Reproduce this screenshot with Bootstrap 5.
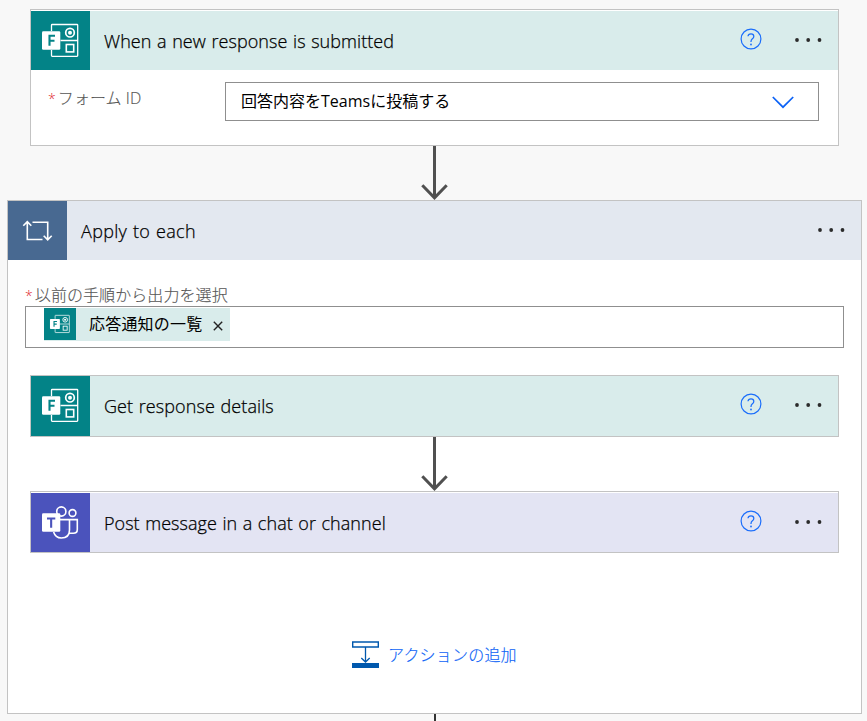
<!DOCTYPE html>
<html lang="ja">
<head>
<meta charset="utf-8">
<meta name="viewport" content="width=device-width, initial-scale=1">
<title>Flow designer</title>
<link href="https://cdn.jsdelivr.net/npm/bootstrap@5.3.0/dist/css/bootstrap.min.css" rel="stylesheet">
<style>
body{background:#f8f8f8;font-family:"Open Sans","Noto Sans CJK JP",sans-serif;font-size:16px;line-height:24px;color:#000}
.designer{width:867px;height:721px;padding:9px 5px 0 7px}
.step,.scope{border:1px solid #c3c3c3;background:#fff;width:809px}
.step{margin-left:23px}
.scope .step{margin-left:22px}
.scope{width:855px;height:514px}
.trigger{height:137px}
.action{height:62px}
.gap-top{padding-top:1px}
.step-head{height:59px}
.action.flush .step-head{height:60px}
.forms-tint{background:#d9eceb}.teams-tint{background:#e3e4f3}.scope-tint{background:#e3e8f0}
.tile{width:59px;flex:none}
.tile svg,.chip svg,.link-flow{display:block}
.bg-forms{background:#038387}.bg-teams{background:#4b53bc}.bg-scope{background:#486991}
.title{font-size:18px;font-weight:300;margin-left:14px;padding-bottom:0;white-space:nowrap;word-spacing:.8px;-webkit-text-stroke:.25px #000}
.t1{letter-spacing:.07px}.t2{letter-spacing:.32px}.t3{letter-spacing:.09px}.t4{letter-spacing:.05px}
.help{width:22px;height:22px;margin-right:32px;margin-bottom:4px}
.dots{width:28px;height:6px;margin-right:16px;margin-bottom:2px}
.flush .help{margin-bottom:5px}
.field-label{color:#555;font-weight:300;white-space:nowrap;letter-spacing:.08px;-webkit-text-stroke:.15px #555}
.req{color:#e0262d;-webkit-text-stroke:0;font-size:14px;margin-right:2px}
.box{border:1px solid #8f8f8f;background:#fff;color:#000}
.picker{width:594px;height:39px;margin-left:auto;margin-right:19px;padding:0 24px 0 15px}
.picker span{padding-bottom:2px}
.trigger-body{padding:12px 0 0 17px}
.scope-body{padding-top:23px}
.scope-label{margin-left:17px;height:23px}
.token-box{width:819px;height:42px;margin-left:17px;padding:1px 0 0 18px}
.chip{width:186px;height:33px}
.chip-icon{width:32px;height:32px;flex:none}
.chip-text{margin-left:13px;padding-top:4px;letter-spacing:.2px;white-space:nowrap}
.chip-x{margin:3px 7px 0 auto}
.add{color:#0b62f6;font-weight:300;margin:88px 0 0 344px;gap:9px;letter-spacing:.2px;-webkit-text-stroke:.15px #0b62f6}
.add span{padding-top:1px}
.link-main{margin-left:412px}.link-inner{margin-left:411px}.link-end{margin-left:427px}
.first-inner{margin-top:27px}
</style>
</head>
<body>
<svg class="d-none">
<symbol id="forms" viewBox="0 0 59 59"><g fill="none" stroke="#fff"><path d="M20.500 20V14.200Q20.500 13.500 21.200 13.500H46Q46.700 13.500 46.700 14.200V44.500Q46.700 45.300 46 45.300H21.200Q20.500 45.300 20.500 44.500V39M29.500 29.500H46.500" stroke-width="1.300"/><circle cx="39" cy="21.700" r="4.300" stroke-width="1.700"/><rect x="35.300" y="33.500" width="7.400" height="7.400" stroke-width="1.600"/></g><circle cx="39" cy="21.700" r="2" fill="#fff"/><rect x="11" y="20.300" width="18.300" height="18.500" rx="1.300" fill="#fff"/><path d="M18.500 34.700V24.800H24M18.500 29.800H23.500" fill="none" stroke="#038387" stroke-width="2.100"/></symbol>
<symbol id="teams" viewBox="0 0 59 59"><g fill="none" stroke="#fff" stroke-width="1.600"><circle cx="30.300" cy="18.500" r="4.600"/><circle cx="41.500" cy="20" r="3.400"/><path d="M29 26.600H46.300V36.500Q46.300 40.300 42.300 40.300H38.500M38.500 26.600V37Q38.500 45 30.300 45Q24.500 45 22.600 39"/></g><rect x="11" y="20.300" width="18.300" height="18.500" rx="1.300" fill="#fff"/><path d="M16 25.500H24.300M20.150 25.500V34.700" fill="none" stroke="#4b53bc" stroke-width="2.100"/></symbol>
<symbol id="help" viewBox="0 0 22 22"><circle cx="11" cy="11" r="9.900" fill="none" stroke="#1a6dfb" stroke-width="1.200"/><path d="M8 8.200Q8.200 5.800 11 5.800T13.800 8.400Q13.800 9.700 12.400 10.800T11 13.600V14" fill="none" stroke="#1a6dfb" stroke-width="1.250"/><circle cx="11" cy="16.500" r=".9" fill="#1a6dfb"/></symbol>
<symbol id="dots" viewBox="0 0 28 6"><g fill="#2b2b2b"><circle cx="3" cy="3" r="1.900"/><circle cx="14.200" cy="3" r="1.900"/><circle cx="25.500" cy="3" r="1.900"/></g></symbol>
<symbol id="arrow" viewBox="0 0 30 54"><path d="M15.500 0V51" stroke="#505050" stroke-width="3"/><path d="M3.300 39.300L15.500 51.800L27.700 39.300" fill="none" stroke="#505050" stroke-width="3"/></symbol>
</svg>
<main class="designer overflow-hidden">
  <section class="step trigger gap-top">
    <header class="step-head forms-tint d-flex align-items-center">
      <div class="tile bg-forms"><svg width="59" height="59"><use href="#forms"/></svg></div>
      <div class="title t1">When a new response is submitted</div>
      <svg class="help ms-auto"><use href="#help"/></svg><svg class="dots"><use href="#dots"/></svg>
    </header>
    <div class="trigger-body d-flex">
      <label class="field-label pt-1"><span class="req">*</span>フォーム ID</label>
      <div class="box picker d-flex align-items-center justify-content-between"><span>回答内容をTeamsに投稿する</span>
        <svg width="22" height="14" viewBox="0 0 22 14"><path d="M.8 2L11 12.200L21.200 2" fill="none" stroke="#0b62f6" stroke-width="1.700"/></svg></div>
    </div>
  </section>
  <svg class="link-flow link-main" width="30" height="54"><use href="#arrow"/></svg>
  <section class="scope">
    <header class="step-head scope-tint d-flex align-items-center">
      <div class="tile bg-scope"><svg width="59" height="59" viewBox="0 0 59 59" fill="none" stroke="#fff" stroke-width="1.600"><path d="M34.500 38.500H19.300V20.800M15.300 24.800L19.300 20.600L23.300 24.800M24.500 21.200H39.700V38.800M35.700 34.800L39.700 38.900L43.700 34.800"/></svg></div>
      <div class="title t2">Apply to each</div>
      <svg class="dots ms-auto"><use href="#dots"/></svg>
    </header>
    <div class="scope-body">
      <div class="field-label scope-label"><span class="req">*</span>以前の手順から出力を選択</div>
      <div class="box token-box">
        <div class="chip forms-tint d-flex"><div class="chip-icon bg-forms"><svg width="32" height="32"><use href="#forms"/></svg></div>
          <span class="chip-text">応答通知の一覧</span><svg width="10" height="10" viewBox="0 0 10 10" class="align-self-center chip-x"><path d="M.8 .8L9.200 9.200M9.200 .8L.8 9.200" stroke="#222" stroke-width="1.400"/></svg></div>
      </div>
      <section class="step action flush first-inner">
        <header class="step-head forms-tint d-flex align-items-center">
          <div class="tile bg-forms h-100"><svg width="59" height="59"><use href="#forms"/></svg></div>
          <div class="title t3">Get response details</div>
          <svg class="help ms-auto"><use href="#help"/></svg><svg class="dots"><use href="#dots"/></svg>
        </header>
      </section>
      <svg class="link-flow link-inner" width="30" height="54"><use href="#arrow"/></svg>
      <section class="step action gap-top">
        <header class="step-head teams-tint d-flex align-items-center">
          <div class="tile bg-teams"><svg width="59" height="59"><use href="#teams"/></svg></div>
          <div class="title t4">Post message in a chat or channel</div>
          <svg class="help ms-auto"><use href="#help"/></svg><svg class="dots"><use href="#dots"/></svg>
        </header>
      </section>
      <div class="add d-flex align-items-center"><svg width="27" height="27" viewBox="0 0 27 27"><path d="M.7 1H26.300V6H.7Z" fill="none" stroke="#0058ad" stroke-width="1.400"/><path d="M13.500 6V21M9.300 17L13.500 21L17.700 17" fill="none" stroke="#0058ad" stroke-width="1.300"/><path d="M0 22H27V27H0Z" fill="#0058ad"/></svg><span>アクションの追加</span></div>
    </div>
  </section>
  <svg class="link-flow link-end" width="2" height="8"><path d="M0 0H2V8H0Z" fill="#333"/></svg>
</main>
<script src="https://cdn.jsdelivr.net/npm/bootstrap@5.3.0/dist/js/bootstrap.bundle.min.js"></script>
</body>
</html>
